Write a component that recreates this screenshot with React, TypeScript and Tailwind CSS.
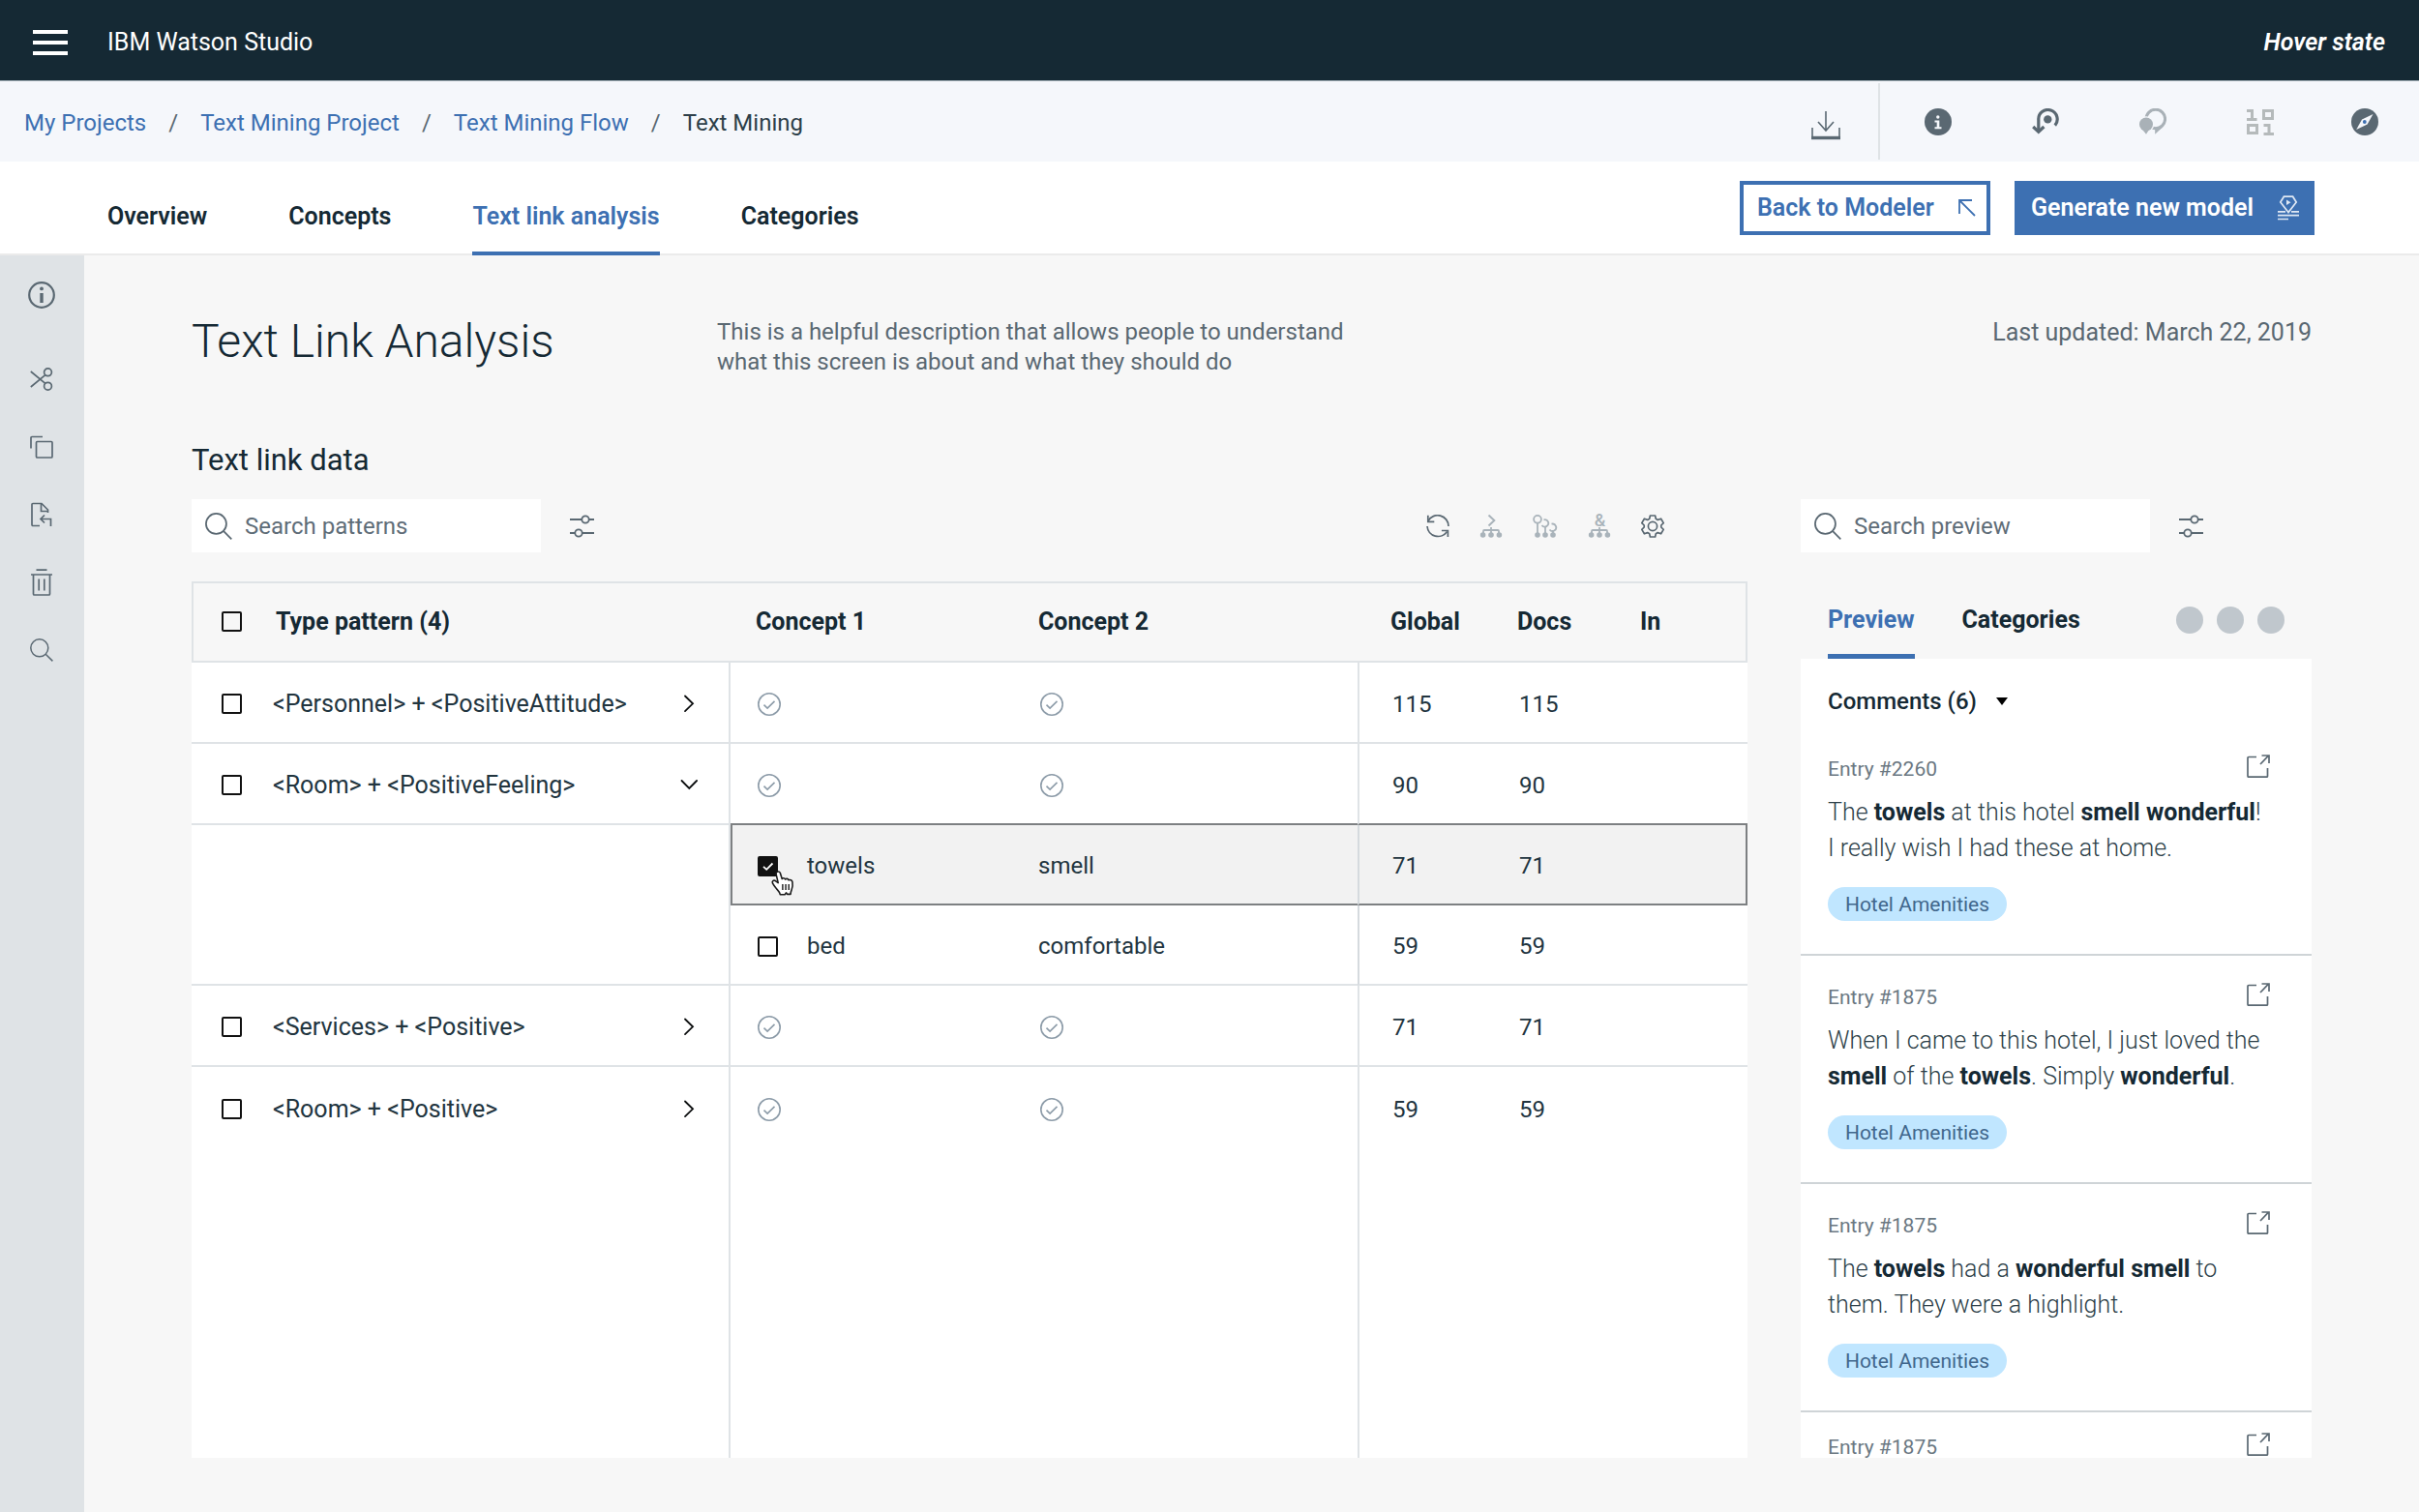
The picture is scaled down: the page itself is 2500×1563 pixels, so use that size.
import { useState } from "react";
import type { ReactNode } from "react";

type IconProps = { className?: string };

/* ---------- icons ---------- */

const MenuIcon = () => (
  <svg width="36" height="26" viewBox="0 0 36 26" fill="#fff">
    <path d="M0 0h36v4H0zM0 11h36v4H0zM0 22h36v4H0z" />
  </svg>
);

const DownloadIcon = () => (
  <svg width="30" height="30" viewBox="0 0 30 30" fill="none" stroke="#5a6872">
    <path d="M15 0v20M7 11l8 9 8-9" strokeWidth="1.6" />
    <path d="M1 17v12M29 17v12" strokeWidth="1.6" />
    <path d="M0 27.5h30" strokeWidth="3.4" />
  </svg>
);

const InfoFilledIcon = () => (
  <svg width="28" height="28" viewBox="0 0 28 28">
    <circle cx="14" cy="14" r="14" fill="#5a6872" />
    <circle cx="13.8" cy="9" r="1.7" fill="#f5f7fb" />
    <path d="M10.5 12.4h4.8v6.8h2.2v2h-7v-2h2.2v-4.8h-2.2z" fill="#f5f7fb" />
  </svg>
);

const ReturnIcon = () => (
  <svg width="28" height="28" viewBox="0 0 28 28" fill="none" stroke="#5a6872" strokeWidth="3.2">
    <path d="M6.8 23V12a9.7 9.7 0 1 1 17 5.6" />
    <path d="M1.2 19l5.6 5.2 5.6-5.2" />
    <circle cx="16.3" cy="11.4" r="4.2" fill="#5a6872" stroke="none" />
  </svg>
);

const ChatIcon = () => (
  <svg width="28" height="28" viewBox="0 0 28 28">
    <circle cx="16.8" cy="11" r="9.8" fill="none" stroke="#a9b1b7" strokeWidth="3" />
    <path d="M16.2 19.500h7.800L16.200 26.800z" fill="#a9b1b7" />
    <circle cx="7" cy="16.500" r="8.200" fill="#f5f7fb" />
    <circle cx="7" cy="16.500" r="7" fill="#a9b1b7" />
    <path d="M2 20.500h9L7 26.800z" fill="#a9b1b7" />
  </svg>
);

const BinaryIcon = () => (
  <svg width="28" height="28" viewBox="0 0 28 28" fill="none" stroke="#b5babb" strokeWidth="3">
    <path d="M0 2.5h5.5V12M0 11.5h10.5" />
    <path d="M17.5 2.5h9v8h-9z" />
    <path d="M1.5 17.5h9v8h-9z" />
    <path d="M17.5 17.5H23V27M17.5 26.5H28" />
  </svg>
);

const CompassIcon = () => (
  <svg width="28" height="28" viewBox="0 0 28 28">
    <circle cx="14" cy="14" r="14" fill="#5a6872" />
    <path d="M22.5 6L16.6 16.4 5.2 22 11 11.4z" fill="#f5f7fb" />
    <circle cx="13.8" cy="14" r="1.9" fill="#3d70b2" />
  </svg>
);

const ArrowUpLeftIcon = () => (
  <svg width="18" height="18" viewBox="0 0 18 18" fill="none" stroke="#3d70b2" strokeWidth="1.8">
    <path d="M1 15V1h13M1 1l16 16" />
  </svg>
);

const ModelIcon = () => (
  <svg width="22" height="26" viewBox="0 0 22 26" fill="none" stroke="#dfe8f4" strokeWidth="1.7">
    <path d="M11 17.5L2.8 7l3.6-5.8h9.2L19.2 7z" />
    <path d="M9 4.5l4.5 2.8L9 10z" fill="#dfe8f4" stroke="none" />
    <path d="M0 16.8h8M14 16.8h8M0 20.6h22M0 24.5h11" />
  </svg>
);

const InfoIcon = () => (
  <svg width="28" height="28" viewBox="0 0 28 28" fill="#5a6872">
    <circle cx="14" cy="14" r="12.8" fill="none" stroke="#5a6872" strokeWidth="2.2" />
    <circle cx="14" cy="7.4" r="1.9" />
    <path d="M12.3 12h3.4v10h-3.4z" />
  </svg>
);

const CutIcon = () => (
  <svg width="24" height="24" viewBox="0 0 24 24" fill="none" stroke="#5a6872" strokeWidth="1.7">
    <circle cx="18.5" cy="4.8" r="3.9" />
    <circle cx="18.5" cy="19.2" r="3.9" />
    <path d="M.8 4l15 12.4M.8 20l15-12.4" />
  </svg>
);

const CopyIcon = () => (
  <svg width="24" height="24" viewBox="0 0 24 24" fill="none" stroke="#5a6872" strokeWidth="1.7">
    <rect x="6.5" y="6.5" width="16.5" height="16.5" rx="1" />
    <path d="M1 13.5v-11a1 1 0 0 1 1-1h11" />
  </svg>
);

const DocReturnIcon = () => (
  <svg width="22" height="26" viewBox="0 0 22 26" fill="none" stroke="#5a6872" strokeWidth="1.7">
    <path d="M9 24.5H2a1 1 0 0 1-1-1v-21a1 1 0 0 1 1-1h9l6.500 6.500v3" />
    <path d="M10.5 1.500v8h7" />
    <path d="M20.500 25v-7.500h-10M14 13.500l-4 4 4 4" />
  </svg>
);

const TrashIcon = () => (
  <svg width="22" height="28" viewBox="0 0 22 28" fill="none" stroke="#5a6872" strokeWidth="1.7">
    <path d="M5.5 1.200h11M0 6h22" />
    <path d="M2.5 6v20a1 1 0 0 0 1 1h15a1 1 0 0 0 1-1V6" />
    <path d="M8.2 10.500v12M13.800 10.500v12" />
  </svg>
);

const SearchIcon = ({ className }: IconProps) => (
  <svg className={className} viewBox="0 0 24 24" fill="none" stroke="#5a6872" strokeWidth="1.5">
    <circle cx="9.8" cy="9.8" r="9" />
    <path d="M16.2 16.2l7.2 7.2" />
  </svg>
);

const FilterIcon = () => (
  <svg width="25" height="24" viewBox="0 0 25 24" fill="none" stroke="#5a6872" strokeWidth="1.8">
    <path d="M0 5h12M20 5h5M0 19h5M13 19h12" />
    <circle cx="16" cy="5" r="3.7" />
    <circle cx="9" cy="19" r="3.7" />
  </svg>
);

const RefreshIcon = () => (
  <svg width="24" height="24" viewBox="0 0 24 24" fill="none" stroke="#5a6872" strokeWidth="1.7">
    <path d="M2 6.500A11.200 11.200 0 0 1 23 12M1 12a11.200 11.200 0 0 0 20.500 5.500" />
    <path d="M1.8.8v6.500h6.500M22.400 23v-6.500h-6.500" />
  </svg>
);

const TreeBase = () => (
  <g>
    <path d="M4 20v-3a1 1 0 0 1 1-1h14a1 1 0 0 1 1 1v3M12 13v8" fill="none" stroke="#a9b3ba" strokeWidth="1.8" />
    <circle cx="3.6" cy="21" r="2.8" fill="#a9b3ba" />
    <circle cx="12" cy="21" r="2.8" fill="#a9b3ba" />
    <circle cx="20.4" cy="21" r="2.8" fill="#a9b3ba" />
  </g>
);

const ChevronTreeIcon = () => (
  <svg width="24" height="24" viewBox="0 0 24 24">
    <path d="M9.5.5l5.800 5.500-5.800 5.500" fill="none" stroke="#a9b3ba" strokeWidth="2" />
    <TreeBase />
  </svg>
);

const AndTreeIcon = () => (
  <svg className="overflow-visible" width="24" height="24" viewBox="0 0 24 24">
    <text x="12.5" y="12" textAnchor="middle" fontSize="18" fontWeight="500" fontFamily="Roboto, sans-serif" fill="#a9b3ba">
      &amp;
    </text>
    <TreeBase />
  </svg>
);

const PinsIcon = () => (
  <svg width="26" height="24" viewBox="0 0 26 24" fill="none" stroke="#a9b3ba" strokeWidth="1.8">
    <circle cx="5" cy="4.8" r="3.900" />
    <path d="M5 8.500V20M13 12v9M21 16v5" />
    <path d="M11.500 5.300a3.700 3.700 0 1 1-2 5.700M19.500 9.700a3.700 3.700 0 1 1-2 5.700" />
    <g fill="#a9b3ba" stroke="none">
      <circle cx="5" cy="21" r="2.800" />
      <circle cx="13" cy="21" r="2.800" />
      <circle cx="21" cy="21" r="2.800" />
    </g>
  </svg>
);

const GearIcon = () => (
  <svg width="24" height="24" viewBox="0 0 24 24" fill="none" stroke="#5a6872" strokeWidth="1.7" strokeLinejoin="round">
    <path d="M9.400 1h5.200l.7 3.200 2 1.200 3.300-1.200 2.600 4.400L20.800 11v2l2.400 2.400-2.600 4.400-3.300-1.200-2 1.200-.7 3.200H9.400l-.7-3.200-2-1.200-3.300 1.200-2.600-4.400L3.200 13v-2L.8 8.600l2.600-4.400 3.300 1.200 2-1.200z" />
    <circle cx="12" cy="12" r="4.6" />
  </svg>
);

const ChevronIcon = ({ open }: { open?: boolean }) => (
  <svg width="24" height="24" viewBox="0 0 24 24" fill="none" stroke="#0b0d0e" strokeWidth="1.8" strokeLinecap="round">
    {open ? <path d="M4.500 8l7.800 8 7.800-8" /> : <path d="M8 4.500l8 7.800-8 7.800" />}
  </svg>
);

const CheckCircleIcon = () => (
  <svg role="img" aria-label="Matched" width="24" height="24" viewBox="0 0 24 24" fill="none" stroke="#8c9ba8" strokeWidth="1.6">
    <circle cx="12" cy="12" r="11.2" />
    <path d="M6.5 12.700l3.600 3.400 7.400-7.200" />
  </svg>
);

const LaunchIcon = () => (
  <svg width="24" height="24" viewBox="0 0 24 24" fill="none" stroke="#5a6872" strokeWidth="1.7">
    <path d="M10 2.500H2a1 1 0 0 0-1 1v18.700a1 1 0 0 0 1 1h18.500a1 1 0 0 0 1-1V14" />
    <path d="M14 10L22.500 1.200M15.500 1H23v8" />
  </svg>
);

const HandCursor = ({ className }: IconProps) => (
  <svg className={className} width="28" height="30" viewBox="0 0 30 32">
    <path
      d="M7.500 2.500c1.600-1 3.200-.2 3.600 1.300l2 6.300c.2-1 2.800-1.400 3.600.5 1-1 3.200-.9 3.700.9 1.500-.8 3.800-.1 4.200 2.300.5 3.200.2 6.200-1 8.700-.8 1.700-1 3-1 4.600h-3.800l-1-1.600-1.600 2h-5.200c-.4-2.600-2-4.200-4-6.400-1.600-1.800-3.400-4.200-4.400-6.200-1-2.200 1.200-3.800 3.200-2.600l3 2.200L6.600 5.200c-.3-1.200 0-2.200.9-2.700z"
      fill="#fff"
      stroke="#1b1b1b"
      strokeWidth="1.7"
      strokeLinejoin="round"
    />
    <path d="M13.800 16v6.500M17.200 16v6.500M20.600 16v6.500" stroke="#1b1b1b" strokeWidth="1.5" />
  </svg>
);

/* ---------- data ---------- */

const tabs = ["Overview", "Concepts", "Text link analysis", "Categories"];

type Concept = { name: string; link: string; count: number; selected?: boolean };
type Pattern = { label: string; count: number; concepts?: Concept[] };

const patterns: Pattern[] = [
  { label: "<Personnel> + <PositiveAttitude>", count: 115 },
  {
    label: "<Room> + <PositiveFeeling>",
    count: 90,
    concepts: [
      { name: "towels", link: "smell", count: 71, selected: true },
      { name: "bed", link: "comfortable", count: 59 },
    ],
  },
  { label: "<Services> + <Positive>", count: 71 },
  { label: "<Room> + <Positive>", count: 59 },
];

const entries: { id: string; text?: ReactNode }[] = [
  {
    id: "2260",
    text: (
      <>
        The <b>towels</b> at this hotel <b>smell wonderful</b>!
        <br />I really wish I had these at home.
      </>
    ),
  },
  {
    id: "1875",
    text: (
      <>
        When I came to this hotel, I just loved the
        <br />
        <b>smell</b> of the <b>towels</b>. Simply <b>wonderful</b>.
      </>
    ),
  },
  {
    id: "1875",
    text: (
      <>
        The <b>towels</b> had a <b>wonderful smell</b> to
        <br />
        them. They were a highlight.
      </>
    ),
  },
  { id: "1875" },
];

/* ---------- pieces ---------- */

function Checkbox({ label, defaultChecked }: { label: string; defaultChecked?: boolean }) {
  return (
    <span className="relative inline-flex flex-shrink-0">
      <input
        type="checkbox"
        aria-label={label}
        defaultChecked={defaultChecked}
        className="peer size-[21px] appearance-none rounded-[2px] border-2 border-[#111] checked:bg-[#111]"
      />
      <svg
        className="pointer-events-none absolute inset-0 hidden peer-checked:block"
        viewBox="0 0 21 21"
        fill="none"
        stroke="#fff"
        strokeWidth="1.8"
      >
        <path d="M6 10.800l3.200 3 6.300-6.300" />
      </svg>
    </span>
  );
}

function SearchBox({ placeholder }: { placeholder: string }) {
  const [query, setQuery] = useState("");
  return (
    <div className="flex items-center">
      <label className="flex h-[55px] w-[361px] items-center gap-[13px] bg-white pl-[14px]">
        <SearchIcon className="size-7 flex-shrink-0" />
        <input
          type="text"
          aria-label={placeholder}
          value={query}
          onChange={(e) => setQuery(e.target.value)}
          placeholder={placeholder}
          className="w-full min-w-0 bg-transparent outline-none placeholder:text-[#5f6d78]"
        />
      </label>
      <button aria-label="Filter" className="ml-[30px]">
        <FilterIcon />
      </button>
    </div>
  );
}

function TopBar() {
  return (
    <header className="flex h-[84px] flex-shrink-0 items-center border-b border-[#a4b0b8] bg-[#152934] pt-1 pr-[35px] pl-[34px] text-[25px] text-white">
      <button aria-label="Menu">
        <MenuIcon />
      </button>
      <span className="ml-[41px]">IBM Watson Studio</span>
      <span className="ml-auto font-semibold italic">Hover state</span>
    </header>
  );
}

function Breadcrumbs() {
  return (
    <div className="flex h-[83px] flex-shrink-0 items-center bg-[#f5f7fb] pr-[42px] pl-[25px]">
      <nav aria-label="Breadcrumb" className="flex gap-[23px] pt-[2px] text-[#3d70b2]">
        <a href="#projects">My Projects</a>
        <span className="text-[#5a6872]">/</span>
        <a href="#project">Text Mining Project</a>
        <span className="text-[#5a6872]">/</span>
        <a href="#flow">Text Mining Flow</a>
        <span className="text-[#5a6872]">/</span>
        <span className="text-[#2d3f49]">Text Mining</span>
      </nav>
      <div className="ml-auto flex h-full items-center">
        <button aria-label="Download" className="mt-2 mr-[39px]">
          <DownloadIcon />
        </button>
        <div className="flex h-[79px] items-center border-l-2 border-[#dfe3e6] pl-[46px]">
          <button aria-label="Information" className="mr-[83px]">
            <InfoFilledIcon />
          </button>
          <button aria-label="Revert" className="mr-[83px]">
            <ReturnIcon />
          </button>
          <button aria-label="Comments" className="mr-[83px]">
            <ChatIcon />
          </button>
          <button aria-label="Data" className="mr-20">
            <BinaryIcon />
          </button>
          <button aria-label="Explore">
            <CompassIcon />
          </button>
        </div>
      </div>
    </div>
  );
}

function TabBar() {
  const [active, setActive] = useState("Text link analysis");
  return (
    <div className="flex h-[97px] flex-shrink-0 justify-between border-b-2 border-[#ebebeb] bg-white pr-[108px] pl-[111px] text-[25px] font-semibold">
      <div role="tablist" className="-mb-[2px] flex gap-[84px]">
        {tabs.map((tab) => (
          <button
            key={tab}
            role="tab"
            aria-selected={tab === active}
            onClick={() => setActive(tab)}
            className={
              tab === active
                ? "border-b-4 border-[#3d70b2] pt-5 text-[#3d70b2]"
                : "border-b-4 border-transparent pt-5"
            }
          >
            {tab}
          </button>
        ))}
      </div>
      <div className="flex gap-[25px] pt-5">
        <button className="flex h-[56px] w-[259px] items-center justify-between border-4 border-[#3d70b2] pr-[11px] pl-[14px] text-[#3d70b2]">
          Back to Modeler
          <ArrowUpLeftIcon />
        </button>
        <button className="flex h-[56px] w-[310px] items-center justify-between bg-[#3d70b2] pr-4 pl-[17px] text-white">
          Generate new model
          <ModelIcon />
        </button>
      </div>
    </div>
  );
}

function SideBar() {
  return (
    <aside className="flex w-[87px] flex-shrink-0 flex-col items-center bg-[#dfe3e6] pt-[6px] pr-[2px]">
      <button aria-label="About" className="mb-[17px] flex h-[70px] items-center">
        <InfoIcon />
      </button>
      <button aria-label="Cut" className="flex h-[70px] items-center">
        <CutIcon />
      </button>
      <button aria-label="Copy" className="flex h-[70px] items-center">
        <CopyIcon />
      </button>
      <button aria-label="Paste" className="flex h-[70px] items-center">
        <DocReturnIcon />
      </button>
      <button aria-label="Delete" className="flex h-[70px] items-center">
        <TrashIcon />
      </button>
      <button aria-label="Search" className="flex h-[70px] items-center">
        <SearchIcon className="size-6" />
      </button>
    </aside>
  );
}

function PatternRows({ pattern }: { pattern: Pattern }) {
  const { label, count, concepts } = pattern;
  // the selected concept's outline starts on the bottom edge of its parent row
  const edge = concepts?.[0].selected ? "border-b-2 border-b-[#7d8082]" : "border-b-2 border-b-[#dfe3e6]";

  return (
    <>
      <tr className="h-[84px] [&>td]:pt-[3px]">
        <td className="border-r-2 border-b-2 border-[#dfe3e6] pr-[29px] pl-[31px]">
          <div className="flex items-center">
            <Checkbox label={label} />
            <span className="ml-8 text-[25px]">{label}</span>
            <button aria-label="Toggle concepts" aria-expanded={!!concepts} className="ml-auto">
              <ChevronIcon open={!!concepts} />
            </button>
          </div>
        </td>
        <td className={`${edge} pl-7`}>
          <CheckCircleIcon />
        </td>
        <td className={`${edge} pl-7`}>
          <CheckCircleIcon />
        </td>
        <td className={`${edge} border-l-2 border-l-[#dfe3e6] pl-[34px]`}>{count}</td>
        <td className={`${edge} pl-9`}>{count}</td>
        <td className={edge} />
      </tr>
      {concepts?.map((concept, i) => (
        <ConceptRow key={concept.name} concept={concept} span={i === 0 ? concepts.length : 0} />
      ))}
    </>
  );
}

function ConceptRow({ concept, span }: { concept: Concept; span: number }) {
  const { name, link, count, selected } = concept;
  const edge = selected ? "border-b-2 border-b-[#7d8082] bg-[#f2f2f2]" : "border-b-2 border-b-[#dfe3e6]";

  return (
    <tr className="h-[83px] [&>td]:pt-[3px]">
      {span > 0 && <td rowSpan={span} className="border-r-2 border-b-2 border-[#dfe3e6]" />}
      <td className={selected ? `${edge} border-l-2 border-l-[#7d8082] pl-[26px]` : `${edge} pl-7`}>
        <div className="relative flex items-center gap-[30px]">
          <Checkbox label={name} defaultChecked={selected} />
          {name}
          {selected && <HandCursor className="pointer-events-none absolute top-5 left-[13px]" />}
        </div>
      </td>
      <td className={`${edge} pl-[26px]`}>{link}</td>
      <td className={`${edge} border-l-2 border-l-[#d5dade] pl-[34px]`}>{count}</td>
      <td className={`${edge} pl-9`}>{count}</td>
      <td className={selected ? `${edge} border-r-2 border-r-[#7d8082]` : edge} />
    </tr>
  );
}

function PatternTable() {
  return (
    <table className="w-full table-fixed border-separate border-spacing-0 bg-white text-left text-[#22353f]">
      <colgroup>
        <col className="w-[557px]" />
        <col className="w-[292px]" />
        <col className="w-[356px]" />
        <col className="w-[131px]" />
        <col className="w-[125px]" />
        <col />
      </colgroup>
      <thead className="bg-[#f7f7f7] text-[25px] font-semibold text-[#152934]">
        <tr className="h-[84px]">
          <th className="border-y-2 border-l-2 border-[#dfe3e6] pl-[29px]">
            <div className="flex items-center gap-[35px]">
              <Checkbox label="Select all" />
              Type pattern (4)
            </div>
          </th>
          <th className="border-y-2 border-[#dfe3e6] pl-[26px]">Concept 1</th>
          <th className="border-y-2 border-[#dfe3e6] pl-[26px]">Concept 2</th>
          <th className="border-y-2 border-[#dfe3e6] pl-[34px]">Global</th>
          <th className="border-y-2 border-[#dfe3e6] pl-[34px]">Docs</th>
          <th className="border-y-2 border-r-2 border-[#dfe3e6] pl-9">In</th>
        </tr>
      </thead>
      <tbody className="[&>tr:nth-last-child(2)>td]:border-b-0">
        {patterns.map((pattern) => (
          <PatternRows key={pattern.label} pattern={pattern} />
        ))}
        {/* takes up the height that is left */}
        <tr className="h-full">
          <td className="border-r-2 border-[#dfe3e6]" />
          <td />
          <td />
          <td className="border-l-2 border-[#dfe3e6]" />
          <td />
          <td />
        </tr>
      </tbody>
    </table>
  );
}

function PreviewPanel() {
  return (
    <section className="flex min-h-0 w-[528px] flex-shrink-0 flex-col">
      <SearchBox placeholder="Search preview" />
      <div className="mt-[30px] flex h-20 flex-shrink-0 items-center px-7">
        <div role="tablist" className="flex h-full gap-[49px] text-[25px] font-bold">
          <button role="tab" aria-selected="true" className="border-y-[5px] border-t-transparent border-b-[#3d70b2] text-[#3d70b2]">
            Preview
          </button>
          <button role="tab" aria-selected="false">
            Categories
          </button>
        </div>
        <div className="ml-auto flex gap-[14px]">
          <span className="size-7 rounded-full bg-[#c0c7cd]" />
          <span className="size-7 rounded-full bg-[#c0c7cd]" />
          <span className="size-7 rounded-full bg-[#c0c7cd]" />
        </div>
      </div>
      <div className="min-h-0 flex-1 overflow-hidden bg-white">
        <div className="flex items-center px-7 pt-6 pb-[7px]">
          <select aria-label="Preview type" className="h-10 appearance-none bg-transparent font-medium outline-none">
            <option>Comments (6)</option>
          </select>
          <svg className="ml-5" width="12" height="8" viewBox="0 0 12 8">
            <path d="M0 0h12L6 8z" />
          </svg>
        </div>
        {entries.map((entry, i) => (
          <article
            key={i}
            className={
              entry.text
                ? "border-b-2 border-[#cfd4d7] pt-[29px] pr-[43px] pb-[34px] pl-7"
                : "pt-[22px] pr-[43px] pl-7"
            }
          >
            <div className="flex items-start justify-between">
              <h3 className="text-[21px] leading-7 text-[#6b7882]">Entry #{entry.id}</h3>
              <button aria-label="Open entry" className="-mt-px">
                <LaunchIcon />
              </button>
            </div>
            {entry.text && (
              <>
                <p className="mt-3 text-[25px] leading-[37px] font-light whitespace-nowrap text-[#2d3f49] [&>b]:font-bold [&>b]:text-[#152934]">
                  {entry.text}
                </p>
                <span className="mt-[22px] flex h-[35px] w-[185px] items-center justify-center rounded-full bg-[#c0e6ff] text-[21px] text-[#41678c]">
                  Hotel Amenities
                </span>
              </>
            )}
          </article>
        ))}
      </div>
    </section>
  );
}

export default function App() {
  return (
    <div className="flex h-screen flex-col bg-[#f7f7f7] font-[Roboto,sans-serif] text-2xl text-[#152934]">
      <TopBar />
      <Breadcrumbs />
      <TabBar />
      <div className="flex min-h-0 flex-1">
        <SideBar />
        <main className="flex min-w-0 flex-1 flex-col px-[111px] pt-[59px] pb-[56px]">
          <div className="flex h-[133px] flex-shrink-0 items-start">
            <h1 className="w-[543px] text-5xl leading-[60px] font-light">Text Link Analysis</h1>
            <p className="pt-[5px] leading-[31px] text-[#5a6872]">
              This is a helpful description that allows people to understand
              <br />
              what this screen is about and what they should do
            </p>
            <p className="ml-auto pt-[5px] text-[25px] leading-[31px] text-[#5a6872]">Last updated: March 22, 2019</p>
          </div>
          <h2 className="text-[31px] leading-10">Text link data</h2>
          <div className="mt-5 flex min-h-0 flex-1 gap-[55px]">
            <section className="flex min-w-0 flex-1 flex-col">
              <div className="flex items-center justify-between pr-[86px]">
                <SearchBox placeholder="Search patterns" />
                <div className="flex gap-[31px]">
                  <button aria-label="Refresh">
                    <RefreshIcon />
                  </button>
                  <button aria-label="Expand tree">
                    <ChevronTreeIcon />
                  </button>
                  <button aria-label="Compare">
                    <PinsIcon />
                  </button>
                  <button aria-label="Combine">
                    <AndTreeIcon />
                  </button>
                  <button aria-label="Settings">
                    <GearIcon />
                  </button>
                </div>
              </div>
              <div className="mt-[30px] grid flex-1">
                <PatternTable />
              </div>
            </section>
            <PreviewPanel />
          </div>
        </main>
      </div>
    </div>
  );
}
